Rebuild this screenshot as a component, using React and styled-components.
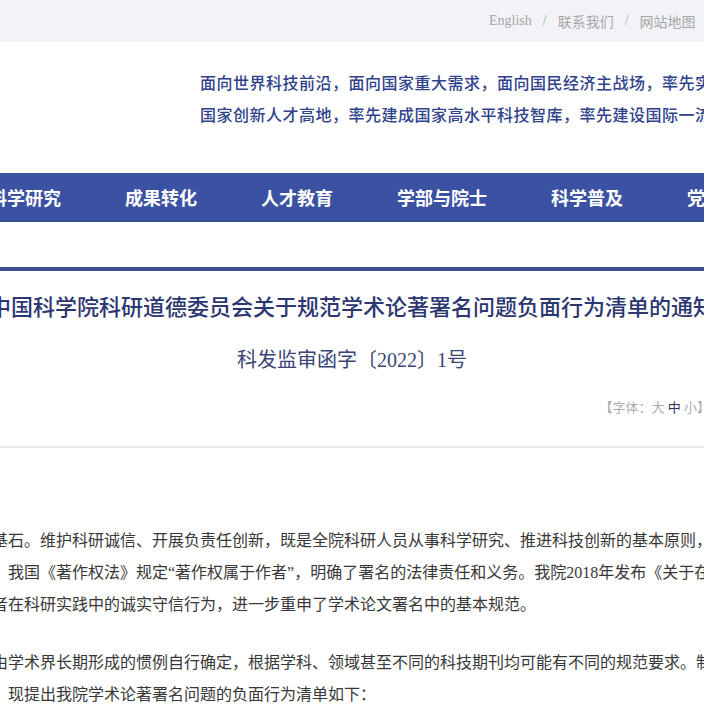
import React from 'react';
import styled, { createGlobalStyle } from 'styled-components';

const GlobalStyle = createGlobalStyle`
  html, body {
    margin: 0;
    padding: 0;
    background: #fff;
    overflow: hidden;
  }
  body {
    font-family: "Liberation Serif", "Noto Sans CJK SC", serif;
  }
`;

const Viewport = styled.div`
  width: 704px;
  height: 705px;
  overflow: hidden;
`;

// the site is a centred 1200px page; the shot only shows part of it
const Page = styled.div`
  width: 1200px;
  margin-left: -248px;
`;

const TopBar = styled.div`
  height: 42px;
  background: #f2f3f7;
  display: flex;
  align-items: center;
  padding-left: 737px;
  font-size: 14px;
  color: #a6a6a6;
  white-space: nowrap;
`;

const TopLink = styled.a`
  color: inherit;
  text-decoration: none;
  font-family: ${(p) => (p.$latin ? '"Liberation Serif", serif' : '"Noto Sans CJK SC", sans-serif')};
`;

const Slash = styled.span`
  margin: 0 11px;
`;

const Header = styled.header`
  display: grid;
  grid-template-columns: 448px 1fr;
  padding: 24px 0 43px;
`;

const Slogan = styled.div`
  font-family: "Noto Sans CJK SC", sans-serif;
  font-size: 16px;
  letter-spacing: 0.5px;
  line-height: 32px;
  font-weight: 500;
  color: #2f428c;
  white-space: nowrap;
`;

const Nav = styled.nav`
  box-sizing: border-box;
  height: 49px;
  background: #3b52a3;
  border-bottom: 2px solid #354a95;
  display: flex;
  align-items: center;
  gap: 64px;
  padding-left: 1px;
`;

const NavItem = styled.a`
  font-family: "Noto Sans CJK SC", sans-serif;
  font-size: 18px;
  font-weight: 700;
  color: #fff;
  text-decoration: none;
  white-space: nowrap;
  flex-shrink: 0;
`;

const Rule = styled.div`
  margin-top: 45px;
  height: 4px;
  background: #3d4f92;
`;

const Title = styled.h1`
  margin: 18px 0 0;
  display: flex;
  justify-content: center;
  white-space: nowrap;
  font-family: "Noto Sans CJK SC", sans-serif;
  font-size: 22px;
  line-height: 32px;
  font-weight: 500;
  color: #2c3671;
`;

const DocNo = styled.div`
  margin-top: 24px;
  text-align: center;
  font-size: 20px;
  line-height: 30px;
  color: #3b4476;
`;

const FontTool = styled.div`
  margin-top: 23px;
  text-align: right;
  padding-right: 242px;
  font-size: 13px;
  line-height: 20px;
  color: #ababab;
  white-space: nowrap;
`;

const SizeOption = styled.span`
  color: ${(p) => (p.$active ? '#2a3158' : '#ababab')};
`;

const Divider = styled.div`
  margin-top: 28px;
  height: 2px;
  background: #ebebeb;
`;

const Body = styled.div`
  margin-top: 77px;
  padding-left: 240px;
  font-size: 16px;
  line-height: 32px;
  color: #383838;
`;

const Paragraph = styled.p`
  margin: 0 0 26px;
`;

const Line = styled.span`
  display: block;
  white-space: nowrap;
`;

const navItems = ['首页', '组织机构', '科学研究', '成果转化', '人才教育', '学部与院士', '科学普及', '党建与创新文化', '信息公开'];

export default function App() {
  return (
    <Viewport>
      <GlobalStyle />
      <Page>
        <TopBar>
          <TopLink $latin>English</TopLink>
          <Slash>/</Slash>
          <TopLink>联系我们</TopLink>
          <Slash>/</Slash>
          <TopLink>网站地图</TopLink>
          <Slash>/</Slash>
          <TopLink>院长信箱</TopLink>
        </TopBar>

        <Header>
          <div />
          <Slogan>
            <Line>面向世界科技前沿，面向国家重大需求，面向国民经济主战场，率先实现科学技术跨越发展，率先建成</Line>
            <Line>国家创新人才高地，率先建成国家高水平科技智库，率先建设国际一流科研机构。</Line>
          </Slogan>
        </Header>

        <Nav>
          {navItems.map((item) => (
            <NavItem key={item}>{item}</NavItem>
          ))}
        </Nav>

        <Rule />

        <Title>中国科学院科研道德委员会关于规范学术论著署名问题负面行为清单的通知</Title>
        <DocNo>科发监审函字〔2022〕1号</DocNo>

        <FontTool>
          【字体：<SizeOption>大</SizeOption> <SizeOption $active>中</SizeOption> <SizeOption>小</SizeOption>】
        </FontTool>

        <Divider />

        <Body>
          <Paragraph>
            <Line>基石。维护科研诚信、开展负责任创新，既是全院科研人员从事科学研究、推进科技创新的基本原则，也是全院科研人员必须</Line>
            <Line>，我国《著作权法》规定“著作权属于作者”，明确了署名的法律责任和义务。我院2018年发布《关于在学术论文署名中常见问题或错误的诚信提醒》</Line>
            <Line>者在科研实践中的诚实守信行为，进一步重申了学术论文署名中的基本规范。</Line>
          </Paragraph>
          <Paragraph>
            <Line>由学术界长期形成的惯例自行确定，根据学科、领域甚至不同的科技期刊均可能有不同的规范要求。制定</Line>
            <Line>，现提出我院学术论著署名问题的负面行为清单如下：</Line>
          </Paragraph>
        </Body>
      </Page>
    </Viewport>
  );
}
